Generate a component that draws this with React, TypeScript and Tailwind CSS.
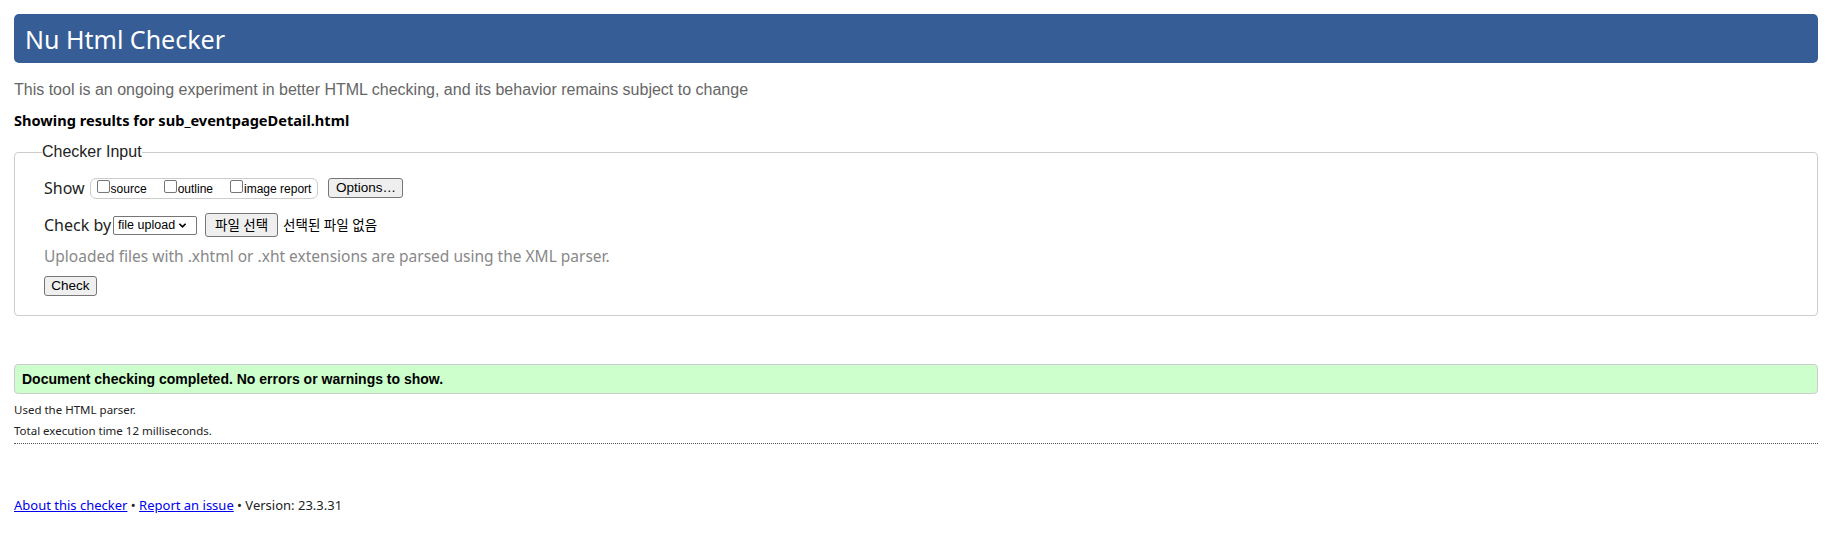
import React from "react";

const malgun = "font-['Noto_Sans','Noto_Sans_CJK_KR',sans-serif]";
const arial = "font-['Liberation_Sans','Noto_Sans_CJK_KR',sans-serif]";

function Btn({ children, className = "" }: { children: React.ReactNode; className?: string }) {
  return (
    <span
      className={`inline-flex items-center justify-center bg-[#efefef] border border-[#767676] rounded-[3px] text-black ${className}`}
    >
      {children}
    </span>
  );
}

function Box({ label }: { label: string }) {
  return (
    <span className="inline-flex items-end">
      <span className="inline-block w-[13px] h-[13px] border border-[#767676] rounded-[2px] bg-white mb-[3px]" />
      <span className={`${arial} text-[12px] leading-[14px] text-black ml-[1px]`}>{label}</span>
    </span>
  );
}

export default function App() {
  return (
    <div className={`min-h-[547px] bg-white pl-[14px] pr-[24px] pt-[14px] ${malgun}`}>
      <div className="h-[49px] rounded-[5px] bg-[#365d95] flex items-center pl-[11px]">
        <h1 className={`${malgun} text-white text-[25px] leading-[30px] font-normal`}>Nu Html Checker</h1>
      </div>

      <p className={`${arial} mt-[17px] text-[16px] leading-[20px] text-[#666]`}>
        This tool is an ongoing experiment in better HTML checking, and its behavior remains subject to change
      </p>

      <p className={`${malgun} mt-[10px] text-[14.6px] leading-[20px] font-bold text-black`}>
        Showing results for sub_eventpageDetail.html
      </p>

      <fieldset className="mt-[12px] border border-[#ccc] rounded-[4px] pl-[29px] pr-[14px] pb-[19px] pt-[15px]">
        <legend className={`${arial} -ml-[2px] text-[16px] leading-[20px] text-[#222]`}>Checker Input</legend>

        <div className="flex items-center h-[22px]">
          <span className={`${malgun} text-[16px] leading-[20px] text-[#222]`}>Show</span>
          <span className="ml-[5px] inline-flex items-center gap-[17px] h-[21px] border border-[#ccc] rounded-[6px] pl-[6px] pr-[6px]">
            <Box label="source" />
            <Box label="outline" />
            <Box label="image report" />
          </span>
          <Btn className={`${arial} ml-[10px] h-[20px] w-[75px] text-[13.5px]`}>Options…</Btn>
        </div>

        <div className="flex items-center h-[24px] mt-[14px]">
          <span className={`${malgun} text-[16px] leading-[20px] text-[#222]`}>Check by</span>
          <span className={`${arial} ml-[2px] inline-flex items-center h-[19px] w-[84px] border border-[#767676] rounded-[2px] pl-[4px] text-[12.5px] text-black`}>
            file upload
            <svg viewBox="0 0 10 10" className="ml-[3px] w-[9px] h-[9px]">
              <path d="M1.5 3 L5 6.5 L8.5 3" fill="none" stroke="black" strokeWidth="1.8" />
            </svg>
          </span>
          <Btn className={`${malgun} ml-[8px] h-[24px] w-[73px] text-[13.5px]`}>파일 선택</Btn>
          <span className={`${malgun} ml-[5px] text-[13.5px] text-black`}>선택된 파일 없음</span>
        </div>

        <p className={`${malgun} mt-[9px] text-[15.5px] leading-[20px] text-[#888]`}>
          Uploaded files with .xhtml or .xht extensions are parsed using the XML parser.
        </p>

        <div className="mt-[10px] flex">
          <Btn className={`${arial} h-[20px] w-[53px] text-[13.5px]`}>Check</Btn>
        </div>
      </fieldset>

      <div className={`${arial} mt-[48px] h-[30px] flex items-center bg-[#ccffcc] border border-[#ccc] rounded-[4px] pl-[7px] text-[14px] font-bold text-black`}>
        Document checking completed. No errors or warnings to show.
      </div>

      <div className={`${malgun} mt-[5px] text-[11.5px] leading-[21px] text-[#222]`}>
        <p>Used the HTML parser.</p>
        <p>Total execution time 12 milliseconds.</p>
      </div>
      <div className="mt-[2px] border-t border-dotted border-[#555]" />

      <p className={`${malgun} mt-[51px] text-[13px] leading-[20px] text-[#222]`}>
        <a className="text-[#0000ee] underline" href="#">About this checker</a>
        {" • "}
        <a className="text-[#0000ee] underline" href="#">Report an issue</a>
        {" • Version: 23.3.31"}
      </p>
    </div>
  );
}
